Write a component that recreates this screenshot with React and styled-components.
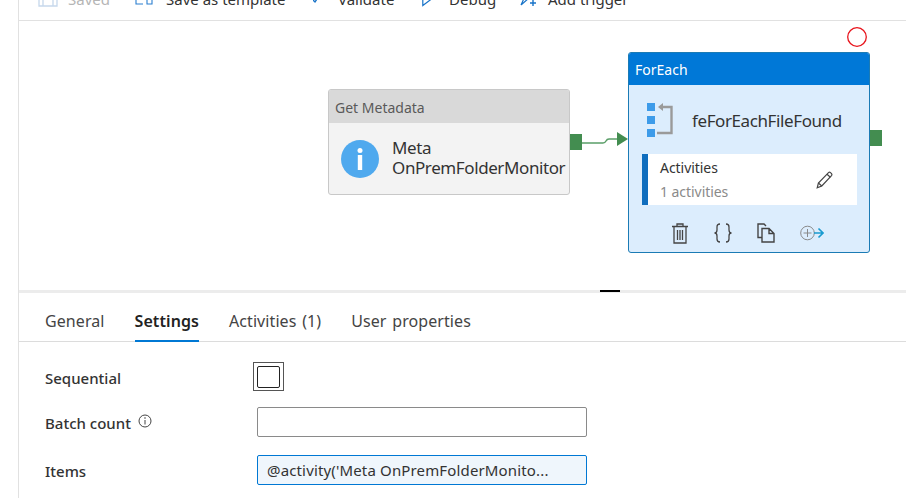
import React from "react";
import styled, { createGlobalStyle } from "styled-components";

const Global = createGlobalStyle`
  html, body { margin: 0; padding: 0; background: #fff; }
  body { width: 906px; height: 498px; overflow: hidden; font-family: "Noto Sans", "Open Sans", "Liberation Sans", sans-serif; color: #333; }
`;
const Page = styled.div`
  width: 906px; height: 498px; display: flex; overflow: hidden;
`;
const Gutter = styled.div`
  width: 18px; flex: none; border-right: 1px solid #e1e1e1;
`;
const Main = styled.div`
  flex: 1; min-width: 0; display: flex; flex-direction: column;
`;
const Toolbar = styled.div`
  height: 20px; flex: none; border-bottom: 1px solid #e1e1e1; display: flex; align-items: flex-start; overflow: hidden; padding-left: 19px;
`;
const ToolItem = styled.div`
  display: flex; align-items: center; height: 20px; margin-top: -11px;
  width: ${p => p.$w}px; flex: none; gap: ${p => p.$gap}px; font-size: 15px; white-space: nowrap;
  color: ${p => (p.$muted ? "#b5b5b5" : "#333")};
  svg { flex: none; }
`;
const Canvas = styled.div`
  position: relative; height: 269px; flex: none; background: #fff;
`;
const Node = styled.div`
  position: absolute; left: ${p => p.$x}px; top: ${p => p.$y}px; width: ${p => p.$w}px; height: ${p => p.$h}px;
  box-sizing: border-box; border-radius: 3px; overflow: hidden; display: flex; flex-direction: column;
  border: 1px solid ${p => p.$border}; background: ${p => p.$bg};
`;
const NodeHead = styled.div`
  height: ${p => p.$h}px; flex: none; display: flex; align-items: center; padding-left: 6px; padding-top: 1px; box-sizing: border-box;
  font-size: 14px; background: ${p => p.$bg}; color: ${p => p.$fg};
`;
const NodeBody = styled.div`
  display: flex; align-items: center; flex: 1; padding-left: 12px;
`;
const NodeName = styled.div`
  margin-left: 13px; margin-top: -2px; font-size: 17px; line-height: 20px; color: #333; letter-spacing: -0.4px; white-space: nowrap;
`;
const ForBody = styled.div`
  display: flex; flex-direction: column; flex: 1; padding: 0 12px 0 13px;
`;
const ForTitle = styled.div`
  display: flex; align-items: center; height: 69px; flex: none; padding-left: 5px; gap: 19px;
  font-size: 17px; letter-spacing: -0.4px; color: #333;
  span { margin-top: 2px; }
`;
const ActivityBox = styled.div`
  height: 51px; flex: none; background: #fff; border-left: 6px solid #106ebe; display: flex; align-items: center; justify-content: space-between; padding: 0 24px 0 12px;
`;
const ActivityText = styled.div`
  display: flex; flex-direction: column; gap: 5px; font-size: 14px; line-height: 19px; letter-spacing: -0.05px;
  span:last-child { color: #8a8a8a; }
`;
const Actions = styled.div`
  display: flex; align-items: center; height: 46px; box-sizing: border-box; padding: 10px 0 0 30px;
  svg { flex: none; }
`;
const ActionIcon = styled.svg`
  margin-left: ${p => p.$ml}px;
`;
const Port = styled.div`
  position: absolute; left: ${p => p.$x}px; top: ${p => p.$y}px; width: 12px; height: 16px; background: #438d50;
`;
const Overlay = styled.svg`
  position: absolute; left: ${p => p.$x}px; top: ${p => p.$y}px; overflow: visible;
`;
const Splitter = styled.div`
  height: 3px; flex: none; background: #ececec; display: flex; justify-content: flex-end; padding-right: 286px;
`;
const Handle = styled.div`
  width: 20px; height: 2px; background: #000;
`;
const Tabs = styled.div`
  height: 49px; flex: none; display: flex; align-items: stretch; border-bottom: 1px solid #dcdcdc; box-sizing: border-box; padding-left: 26px; gap: 30px;
`;
const Tab = styled.div`
  position: relative; padding-top: 17px; font-size: 16px; line-height: 22px; letter-spacing: 0.08px; word-spacing: 1.5px; white-space: nowrap;
  color: ${p => (p.$active ? "#222" : "#444")};
  font-weight: ${p => (p.$active ? 600 : 400)};
  &::after {
    content: ""; display: ${p => (p.$active ? "block" : "none")};
    position: absolute; left: 0; right: 0; bottom: -1px; height: 2px; background: #0078d4;
  }
`;
const Form = styled.div`
  display: flex; flex-direction: column; padding: 20px 0 0 26px;
`;
const Row = styled.div`
  display: flex; align-items: center; height: ${p => p.$h}px; margin-bottom: ${p => p.$mb}px;
`;
const Label = styled.div`
  width: 212px; flex: none; display: flex; align-items: center; gap: 7px; margin-top: 2px; font-size: 15px; font-weight: 500; color: #333;
`;
const InfoIcon = styled.svg`
  margin-top: -4px;
`;
const CheckFocus = styled.div`
  width: 31px; height: 29px; box-sizing: border-box; margin-left: -4px; border: 1px solid #555; display: flex; align-items: center; justify-content: center;
`;
const CheckBox = styled.div`
  width: 23px; height: 22px; box-sizing: border-box; border: 1px solid #222; border-radius: 2px; background: #fff;
`;
const Input = styled.div`
  width: 330px; height: 30px; box-sizing: border-box; border-radius: 2px; display: flex; align-items: center; padding-left: 9px;
  font-size: 15px; letter-spacing: 0.15px; color: #333; white-space: nowrap;
  border: 1px solid ${p => (p.$focus ? "#0078d4" : "#8a8a8a")};
  background: ${p => (p.$focus ? "#eff6fc" : "#fff")};
`;

export default function App() {
  return (
    <>
      <Global />
      <Page>
        <Gutter />
        <Main>
          <Toolbar>
            <ToolItem $w={97} $gap={10} $muted>
              <svg width="20" height="18" viewBox="0 0 20 18" fill="none" stroke="#c6d8ec" strokeWidth="1.3"><path d="M1 0h15l3 3v13H1z" /><path d="M5 16V9h10v7" /></svg>
              Saved
            </ToolItem>
            <ToolItem $w={178} $gap={13}>
              <svg width="18" height="18" viewBox="0 0 18 18" fill="none" stroke="#2a7fd0" strokeWidth="1.1"><path d="M1 0v14h7M12 9h5v5h-5zM14 0v9" /></svg>
              Save as template
            </ToolItem>
            <ToolItem $w={109} $gap={21}>
              <svg width="4" height="18" viewBox="0 0 4 18" fill="none" stroke="#1873c8" strokeWidth="1.4"><path d="M0 10l2 2 2-3" /></svg>
              Validate
            </ToolItem>
            <ToolItem $w={98} $gap={17}>
              <svg width="10" height="18" viewBox="0 0 10 18" fill="none" stroke="#1873c8" strokeWidth="1.2"><path d="M.8 0v15.500L9.500 9" /></svg>
              Debug
            </ToolItem>
            <ToolItem $w={140} $gap={11}>
              <svg width="17" height="18" viewBox="0 0 17 18" fill="none" stroke="#1873c8" strokeWidth="1.2"><path d="M1 15L6 4M1 15l8-7" /><path d="M13 10v6M10 13h6" strokeWidth="1.4" /></svg>
              Add trigger
            </ToolItem>
          </Toolbar>

          <Canvas>
            <Node $x={309} $y={68} $w={242} $h={106} $border="#c8c8c8" $bg="#f3f3f3">
              <NodeHead $h={33} $bg="#d9d9d9" $fg="#595959">Get Metadata</NodeHead>
              <NodeBody>
                <svg width="38" height="38" viewBox="0 0 38 38">
                  <circle cx="19" cy="19" r="19" fill="#4fa9ee" />
                  <circle cx="19" cy="10.5" r="2.5" fill="#fff" />
                  <rect x="16.8" y="15" width="4.4" height="15" fill="#fff" />
                </svg>
                <NodeName>Meta<br />OnPremFolderMonitor</NodeName>
              </NodeBody>
            </Node>
            <Port $x={551} $y={113} />
            <Overlay $x={563} $y={105} width="46" height="24" viewBox="0 0 46 24" fill="none">
              <path d="M0 17h21q2 0 3-2 1-2 3-2h9" stroke="#5a9e68" strokeWidth="1.5" />
              <path d="M35 6l11 7-11 7z" fill="#438d50" />
            </Overlay>

            <Node $x={609} $y={31} $w={242} $h={201} $border="#1b7bb5" $bg="#dcedfd">
              <NodeHead $h={32} $bg="#0078d7" $fg="#fff">ForEach</NodeHead>
              <ForBody>
                <ForTitle>
                  <svg width="26" height="34" viewBox="0 0 26 34">
                    <rect x="0" y="0" width="8" height="8" fill="#3d9be9" />
                    <rect x="0" y="13" width="8" height="8" fill="#3d9be9" />
                    <rect x="0" y="26" width="8" height="8" fill="#3d9be9" />
                    <path d="M14 4h10.500v26H10" fill="none" stroke="#9a9a9a" strokeWidth="2.4" />
                    <path d="M16 0v8l-5-4z" fill="#9a9a9a" />
                  </svg>
                  <span>feForEachFileFound</span>
                </ForTitle>
                <ActivityBox>
                  <ActivityText>
                    <span>Activities</span>
                    <span>1 activities</span>
                  </ActivityText>
                  <svg width="17" height="18" viewBox="0 0 17 18" fill="none" stroke="#444" strokeWidth="1.2">
                    <path d="M1.2 16.8l1.2-4.8L12.5 1.6q1-.8 2 0l1 1q.8 1 0 2L5.800 15z" />
                    <path d="M2.4 12l3.4 3M11 3.200l3.400 3" />
                  </svg>
                </ActivityBox>
                <Actions>
                  <ActionIcon $ml={0} width="16" height="21" viewBox="0 0 16 21" fill="none" stroke="#444" strokeWidth="1.3">
                    <path d="M0 3.500h16M5 3.500V1h6v2.500M2 3.500V20h12V3.500M5.500 7v10M8 7v10M10.500 7v10" />
                  </ActionIcon>
                  <ActionIcon $ml={26} width="18" height="20" viewBox="0 0 18 20" fill="none" stroke="#444" strokeWidth="1.3">
                    <path d="M6 1Q3 1 3 4v3q0 3-2.500 3Q3 10 3 13v3q0 3 3 3M12 1q3 0 3 3v3q0 3 2.500 3Q15 10 15 13v3q0 3-3 3" />
                  </ActionIcon>
                  <ActionIcon $ml={25} width="18" height="20" viewBox="0 0 18 20" fill="none" stroke="#444" strokeWidth="1.4">
                    <path d="M5 14.500H1V1h6l2 2M5 5.500h7l5 5V19H5zM12 5.500v5h5" />
                  </ActionIcon>
                  <ActionIcon $ml={25} width="24" height="16" viewBox="0 0 24 16" fill="none">
                    <circle cx="7.500" cy="8" r="6.800" stroke="#8a8a8a" strokeWidth="1" />
                    <path d="M7.500 4v8M3.500 8h8" stroke="#8a8a8a" strokeWidth="1" />
                    <path d="M14 8h9M18.500 3.500L23 8l-4.500 4.500" stroke="#1a9bd0" strokeWidth="1.600" />
                  </ActionIcon>
                </Actions>
              </ForBody>
            </Node>
            <Port $x={851} $y={109} />
            <Overlay $x={828} $y={6} width="20" height="20" viewBox="0 0 20 20" fill="none">
              <circle cx="10" cy="10" r="9.300" stroke="#e8141c" strokeWidth="1.300" />
            </Overlay>
          </Canvas>

          <Splitter><Handle /></Splitter>
          <Tabs>
            <Tab>General</Tab>
            <Tab $active>Settings</Tab>
            <Tab>Activities (1)</Tab>
            <Tab>User properties</Tab>
          </Tabs>
          <Form>
            <Row $h={29} $mb={16}>
              <Label>Sequential</Label>
              <CheckFocus><CheckBox /></CheckFocus>
            </Row>
            <Row $h={30} $mb={18}>
              <Label>
                Batch count
                <InfoIcon width="14" height="14" viewBox="0 0 14 14" fill="none">
                  <circle cx="7" cy="7" r="6" stroke="#444" strokeWidth="1" />
                  <path d="M7 6v4.500" stroke="#444" strokeWidth="1" />
                  <circle cx="7" cy="4" r=".8" fill="#444" />
                </InfoIcon>
              </Label>
              <Input />
            </Row>
            <Row $h={30} $mb={0}>
              <Label>Items</Label>
              <Input $focus>@activity('Meta OnPremFolderMonito...</Input>
            </Row>
          </Form>
        </Main>
      </Page>
    </>
  );
}
